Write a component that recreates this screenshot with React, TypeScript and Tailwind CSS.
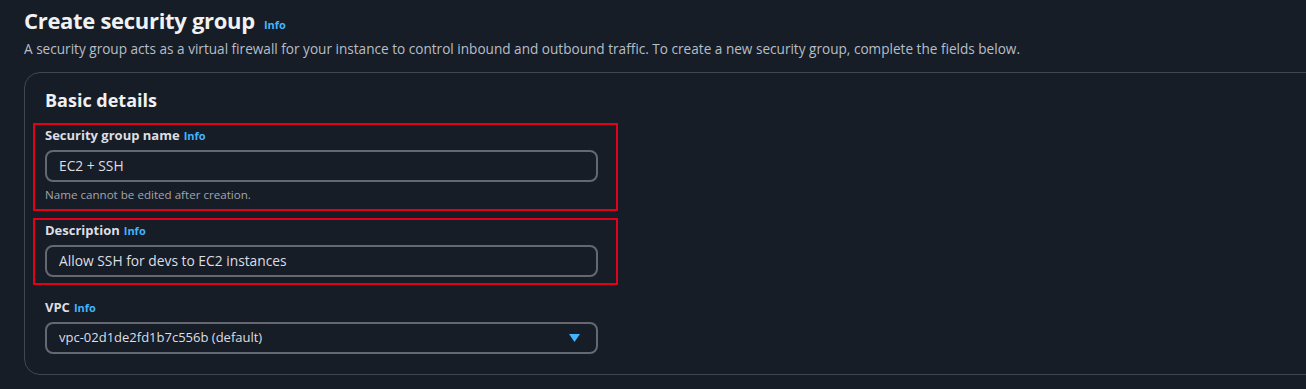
import React from 'react';

const font = { fontFamily: '"Open Sans", "Noto Sans", sans-serif' };

interface FieldProps {
  label: string;
  children: React.ReactNode;
  hint?: string;
}

const InfoLink = ({ className = '' }: { className?: string }) => (
  <span className={`text-[#42b4ff] font-bold ${className}`}>Info</span>
);

const Field: React.FC<FieldProps> = ({ label, children, hint }) => (
  <div>
    <div className="flex items-baseline gap-1 text-[13px] font-bold text-[#dedee3] leading-[18px]">
      {label}
      <InfoLink className="text-[11px]" />
    </div>
    <div className="mt-[5px]">{children}</div>
    {hint && <p className="mt-[5px] text-[11.6px] leading-[16px] text-[#a4a4ad]">{hint}</p>}
  </div>
);

// red annotation box round a field
const Highlight = ({ children, className = '' }: { children: React.ReactNode; className?: string }) => (
  <div className={`-ml-3 w-[585px] border-2 border-[#e3001b] pl-[10px] pr-[18px] ${className}`}>
    {children}
  </div>
);

const TextInput = ({ value }: { value: string }) => (
  <div className="h-8 w-[553px] rounded-lg border-2 border-[#656871] bg-[#161d26] px-3 flex items-center text-[13.8px] text-[#dedee3]">
    {value}
  </div>
);

export default function App() {
  return (
    <div className="min-h-screen w-full overflow-hidden bg-[#161d26] pl-6 pt-[3px]" style={font}>
      <div className="flex items-baseline gap-[9px]">
        <h1 className="text-[22px] font-bold leading-[34px] tracking-[-0.3px] text-[#f0f1f3]">Create security group</h1>
        <InfoLink className="text-[11px]" />
      </div>
      <p className="mt-[3px] text-[13.6px] leading-[18px] text-[#b6bec9]">
        A security group acts as a virtual firewall for your instance to control inbound and outbound traffic. To create a new security group, complete the fields below.
      </p>

      <section className="mt-[14px] w-[1320px] rounded-2xl border border-[#424650] bg-[#161d26] px-5 pt-[16px] pb-[20px]">
        <h2 className="text-[18px] font-bold leading-[22px] text-[#f0f1f3]">Basic details</h2>

        <div className="mt-[12px]">
          <Highlight className="pt-[1px] pb-[6px]">
            <Field label="Security group name" hint="Name cannot be edited after creation.">
              <TextInput value="EC2 + SSH" />
            </Field>
          </Highlight>
        </div>

        <div className="mt-[7px]">
          <Highlight className="pt-[1px] pb-[6px]">
            <Field label="Description">
              <TextInput value="Allow SSH for devs to EC2 instances" />
            </Field>
          </Highlight>
        </div>

        <div className="mt-[13px]">
          <Field label="VPC">
            <div className="h-8 w-[553px] rounded-lg border-2 border-[#656871] bg-[#161d26] pl-3 pr-[16px] flex items-center justify-between text-[13px] text-[#dedee3]">
              <span>vpc-02d1de2fd1b7c556b (default)</span>
              <svg width="11" height="8" viewBox="0 0 11 8" className="fill-[#42b4ff]">
                <polygon points="0,0 11,0 5.5,8" />
              </svg>
            </div>
          </Field>
        </div>
      </section>
    </div>
  );
}
